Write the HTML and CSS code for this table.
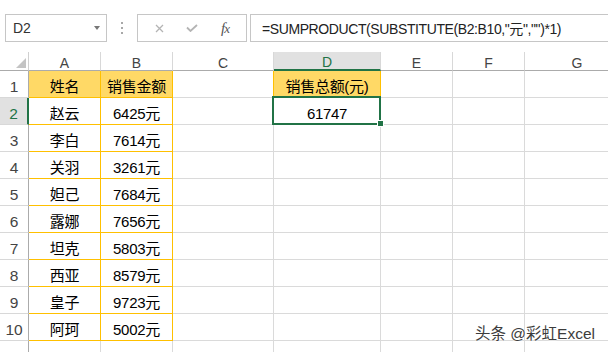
FILE: index.html
```html
<!DOCTYPE html>
<html lang="zh-CN">
<head>
<meta charset="utf-8">
<title>SUMPRODUCT</title>
<link rel="stylesheet" href="styles.css">
</head>
<body>
<div class="app">
  <div class="toolbar">
    <div class="namebox"><span class="name">D2</span><span class="drop"></span></div>
    <div class="grip"><i></i><i></i><i></i></div>
    <div class="fxbox">
      <svg class="ic-x" width="9" height="9" viewBox="0 0 9 9"><path d="M1 1L8 8M8 1L1 8" stroke="#b4b4b4" stroke-width="1.3" fill="none"/></svg>
      <svg class="ic-ok" width="12" height="8" viewBox="0 0 12 8"><path d="M1 3.5L4.5 7L11 1" stroke="#b4b4b4" stroke-width="1.8" fill="none"/></svg>
      <span class="fx"><i>f</i><i>x</i></span>
    </div>
    <div class="formula">=SUMPRODUCT(SUBSTITUTE(B2:B10,"元","")*1)</div>
  </div>
  <div class="sheet">
    <div class="corner"><span class="tri"></span></div>
    <div class="hd">A</div><div class="hd">B</div><div class="hd">C</div><div class="hd sel">D</div><div class="hd">E</div><div class="hd">F</div><div class="hd">G</div>

    <div class="rh">1</div><div class="c t y">姓名</div><div class="c t y">销售金额</div><div class="c or"></div><div class="c or y">销售总额(元)</div><div class="c"></div><div class="c"></div><div class="c"></div>
    <div class="rh sel">2</div><div class="c t">赵云</div><div class="c t">6425元</div><div class="c"></div><div class="c cur">61747<span class="selbox"></span><span class="handle"></span></div><div class="c"></div><div class="c"></div><div class="c"></div>
    <div class="rh">3</div><div class="c t">李白</div><div class="c t">7614元</div><div class="c"></div><div class="c"></div><div class="c"></div><div class="c"></div><div class="c"></div>
    <div class="rh">4</div><div class="c t">关羽</div><div class="c t">3261元</div><div class="c"></div><div class="c"></div><div class="c"></div><div class="c"></div><div class="c"></div>
    <div class="rh">5</div><div class="c t">妲己</div><div class="c t">7684元</div><div class="c"></div><div class="c"></div><div class="c"></div><div class="c"></div><div class="c"></div>
    <div class="rh">6</div><div class="c t">露娜</div><div class="c t">7656元</div><div class="c"></div><div class="c"></div><div class="c"></div><div class="c"></div><div class="c"></div>
    <div class="rh">7</div><div class="c t">坦克</div><div class="c t">5803元</div><div class="c"></div><div class="c"></div><div class="c"></div><div class="c"></div><div class="c"></div>
    <div class="rh">8</div><div class="c t">西亚</div><div class="c t">8579元</div><div class="c"></div><div class="c"></div><div class="c"></div><div class="c"></div><div class="c"></div>
    <div class="rh">9</div><div class="c t">皇子</div><div class="c t">9723元</div><div class="c"></div><div class="c"></div><div class="c"></div><div class="c"></div><div class="c"></div>
    <div class="rh">10</div><div class="c t">阿珂</div><div class="c t">5002元</div><div class="c"></div><div class="c"></div><div class="c"></div><div class="c"></div><div class="c"></div>
    <div class="rh"></div><div class="c"></div><div class="c"></div><div class="c"></div><div class="c"></div><div class="c"></div><div class="c"></div><div class="c"></div>
  </div>
  <div class="watermark">头条 @彩虹Excel</div>
</div>
</body>
</html>
```
FILE: styles.css
```css
* { box-sizing: border-box; }
html, body { margin: 0; padding: 0; background: #fff; }
body { width: 608px; height: 352px; overflow: hidden; font-family: "Liberation Sans", "Noto Sans CJK SC", sans-serif; color: #000; }
.app { position: relative; width: 608px; height: 352px; overflow: hidden; }

.toolbar { height: 52px; display: flex; align-items: flex-start; padding: 14px 0 0 5px; }
.namebox { width: 102px; height: 28px; border: 1px solid #c6c6c6; display: flex; align-items: center; justify-content: space-between; padding: 0 6px 0 7px; }
.name { font-size: 14px; color: #333; }
.drop { width: 0; height: 0; border-left: 3px solid transparent; border-right: 3px solid transparent; border-top: 4px solid #777; }
.grip { width: 30px; height: 28px; display: flex; flex-direction: column; align-items: center; justify-content: center; gap: 3px; }
.grip i { display: block; width: 2px; height: 2px; background: #a8a8a8; }
.fxbox { width: 110px; height: 28px; border: 1px solid #c6c6c6; display: flex; align-items: center; padding-left: 17px; }
.ic-x { margin-right: 22px; }
.ic-ok { margin-right: 23px; }
.fx { font-family: "Liberation Serif", serif; font-style: italic; font-size: 15px; color: #555; letter-spacing: -1px; }
.fx i:last-child { font-size: 13px; }
.formula { flex: 1; height: 28px; margin-left: 3px; margin-right: -2px; border: 1px solid #c6c6c6; display: flex; align-items: center; padding-left: 11px; font-size: 14px; letter-spacing: -0.4px; color: #222; white-space: nowrap; }

.sheet { display: grid; grid-template-columns: 29px 72px 72px 101px 107px 72px 72px 105px; grid-template-rows: 19px repeat(11, 27px); width: 630px; }
.corner { border-right: 1px solid #d0d0d0; border-bottom: 1px solid #ababab; position: relative; }
.tri { position: absolute; right: 2px; bottom: 2px; width: 0; height: 0; border-left: 10px solid transparent; border-bottom: 10px solid #c4c4c4; }
.hd { border-right: 1px solid #d8d8d8; border-bottom: 1px solid #ababab; display: flex; align-items: flex-end; justify-content: center; font-size: 14px; line-height: 14px; color: #444; }
.hd.sel { background: #e1e1e1; color: #217346; border-bottom: 2px solid #217346; }
.rh { border-right: 1px solid #ababab; border-bottom: 1px solid #d8d8d8; display: flex; align-items: flex-end; justify-content: center; font-size: 15.5px; line-height: 18px; padding-bottom: 1px; color: #444; }
.rh.sel { background: #e1e1e1; color: #217346; border-right: 2px solid #217346; }
.c { border-right: 1px solid #dadada; border-bottom: 1px solid #dadada; display: flex; align-items: flex-end; justify-content: center; font-size: 15px; line-height: 18px; letter-spacing: -0.3px; padding-bottom: 1px; white-space: nowrap; }
.c.t { border-right-color: #ffc000; border-bottom-color: #ffc000; }
.c.or { border-right-color: #ffc000; }
.c.y { background: #ffd966; }
.cur { position: relative; }
.selbox { position: absolute; left: -2px; top: -2px; width: 109px; height: 29px; border: 2px solid #217346; }
.handle { position: absolute; left: 104px; top: 23px; width: 5px; height: 5px; background: #217346; outline: 1px solid #fff; }

.watermark { position: absolute; left: 475px; top: 321px; font-size: 15.5px; color: #3c3c3c; text-shadow: 0 0 2px #fff, 0 0 1px #fff; white-space: nowrap; }
```
